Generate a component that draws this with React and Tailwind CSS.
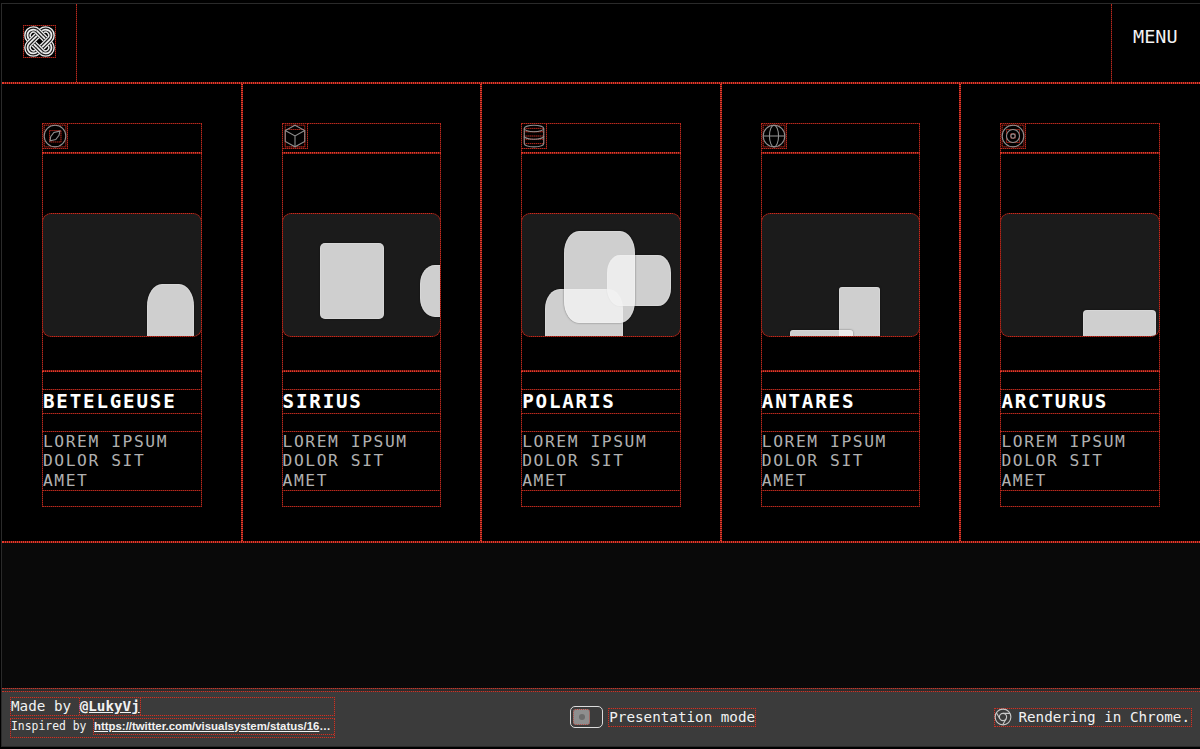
import clsx from 'clsx';

const stars = [
  {
    name: 'BETELGEUSE',
    icon: 'compass',
    shapes: ['left-[104px] top-[70px] w-[47px] h-[76px] rounded-[15px/22px]'],
  },
  {
    name: 'SIRIUS',
    icon: 'cube',
    shapes: [
      'left-[37px] top-[29px] w-[64px] h-[76px] rounded-[5px]',
      'left-[137px] top-[51px] w-[60px] h-[52px] rounded-[15px/19px]',
    ],
  },
  {
    name: 'POLARIS',
    icon: 'database',
    shapes: [
      'left-[23px] top-[75px] w-[78px] h-[80px] rounded-[15px/20px]',
      'left-[85px] top-[41px] w-[64px] h-[51px] rounded-[13px/18px]',
      'left-[42px] top-[17px] w-[71px] h-[92px] rounded-[15px/22px]',
    ],
  },
  {
    name: 'ANTARES',
    icon: 'globe',
    shapes: [
      'left-[77px] top-[73px] w-[41px] h-[70px] rounded-[3px]',
      'left-[28px] top-[116px] w-[63px] h-[40px] rounded-[3px]',
    ],
  },
  {
    name: 'ARCTURUS',
    icon: 'target',
    shapes: ['left-[82px] top-[96px] w-[73px] h-[50px] rounded-[4px]'],
  },
];

// Dotted debug outlines. The gaps between the dots are a darker red.
const strong =
  'border-dotted border-[#e5392a] [background:linear-gradient(#000,#000)_padding-box,linear-gradient(#6e1811,#6e1811)_border-box]';
const soft =
  'border-dotted border-[#b8291d] [background:linear-gradient(#000,#000)_padding-box,linear-gradient(#5a140e,#5a140e)_border-box]';
const card =
  'border-dotted border-[#c92b1e] [background:linear-gradient(#1b1b1b,#1b1b1b)_padding-box,linear-gradient(#661811,#661811)_border-box]';
const bar =
  'border-dotted border-[#c2382c] [background:linear-gradient(#3b3b3b,#3b3b3b)_padding-box,linear-gradient(#642c26,#642c26)_border-box]';

const Debug = (props) => (
  <>
    <rect fill="none" stroke="#420e0a" strokeWidth="0.92" {...props} />
    <rect fill="none" stroke="#b8291d" strokeWidth="0.92" strokeDasharray="0.92 0.92" {...props} />
  </>
);

const icons = {
  compass: (
    <>
      <Debug x="2" y="2" width="20" height="20" />
      <Debug x="7" y="7" width="10.5" height="10.5" />
      <circle cx="12" cy="12" r="10" />
      <path d="M16.500 7.500L11 8.700L8 12.700L7.500 16.500L12.700 15.300L15.700 11.300z" />
    </>
  ),
  cube: (
    <>
      <Debug x="3" y="2" width="18" height="20" />
      <Debug x="3" y="6" width="18" height="16" />
      <path d="M12 2l9 5v10l-9 5-9-5V7z" />
      <path d="M3 7l9 5 9-5M12 12v10" />
    </>
  ),
  database: (
    <>
      <Debug x="3" y="5" width="18" height="3" />
      <Debug x="3" y="8" width="18" height="7" />
      <Debug x="3" y="12" width="18" height="7" />
      <ellipse cx="12" cy="5" rx="9" ry="3" />
      <path d="M3 12c0 1.700 4 3 9 3s9-1.300 9-3" />
      <path d="M3 5v14c0 1.700 4 3 9 3s9-1.300 9-3V5" />
    </>
  ),
  globe: (
    <>
      <Debug x="2" y="2" width="20" height="20" />
      <circle cx="12" cy="12" r="10" />
      <ellipse cx="12" cy="12" rx="4.200" ry="10" />
      <path d="M2 12h20" />
    </>
  ),
  target: (
    <>
      <Debug x="2" y="2" width="20" height="20" />
      <Debug x="6" y="6" width="12" height="12" />
      <Debug x="10" y="10" width="4" height="4" />
      <circle cx="12" cy="12" r="10" />
      <circle cx="12" cy="12" r="6" />
      <circle cx="12" cy="12" r="2" />
    </>
  ),
};

// Each band of the knot is three parallel white lines
function Band({ d }) {
  return (
    <>
      <path d={d} stroke="#000" strokeWidth="7.600" />
      <path d={d} stroke="#ececec" strokeWidth="7" />
      <path d={d} stroke="#1a1a1a" strokeWidth="4.200" />
      <path d={d} stroke="#ececec" strokeWidth="1.800" />
    </>
  );
}

function Logo() {
  return (
    <svg viewBox="0 0 32 32" fill="none" className="size-[31px]">
      <Band d="M13.740 5.260L26.740 18.260A6 6 0 0 1 18.260 26.740L5.260 13.740A6 6 0 0 1 13.740 5.260Z" />
      <Band d="M18.260 5.260L5.260 18.260A6 6 0 0 0 13.740 26.740L26.740 13.740A6 6 0 0 0 18.260 5.260Z" />
      <Band d="M13.300 4.820L18.800 10.320" />
      <Band d="M13.200 21.680L18.700 27.180" />
    </svg>
  );
}

function StarColumn({ star, first, last }) {
  return (
    <div
      className={clsx(
        'pt-[39px]',
        strong,
        first ? 'pl-[40px]' : 'border-l pl-[39px]',
        last ? 'pr-[40px]' : 'border-r pr-[39px]'
      )}
    >
      <div className={clsx('h-[384px] border', soft)}>
        <div className={clsx('-mx-px -mt-px h-[30px] border', soft)}>
          <div className={clsx('-mt-px -ml-px size-[26px] border', soft)}>
            <svg
              viewBox="0 0 24 24"
              fill="none"
              stroke="#8f8f8f"
              strokeWidth="1"
              className="-mt-px -ml-px size-[26px] overflow-visible"
            >
              {icons[star.icon]}
            </svg>
          </div>
        </div>
        <div className={clsx('-mx-px -mt-px h-[2px] border-t', strong)} />

        <div className={clsx('-mx-px -mt-px h-[218px] border pt-[59px]', soft)}>
          <div className={clsx('relative -mx-px h-[124px] overflow-hidden rounded-[9px] border', card)}>
            {star.shapes.map((shape) => (
              <div
                key={shape}
                className={clsx(
                  'absolute bg-[#f2f2f2]/84 shadow-[0_0_2px_rgba(0,0,0,0.5),inset_0_0_1px_1px_rgba(255,255,255,0.2)]',
                  shape
                )}
              />
            ))}
          </div>
        </div>

        <div className={clsx('-mx-px border-t', strong)}>
          <div className={clsx('h-[135px] border-x border-b pt-[17px]', soft)}>
            <h2
              className={clsx(
                '-mx-px h-[25px] border text-[19.200px] leading-[23px] font-bold tracking-[1.800px] text-white',
                soft
              )}
            >
              {star.name}
            </h2>
            <p
              className={clsx(
                '-mx-px mt-[17px] h-[60px] border text-[16.300px] leading-[19.400px] tracking-[1.570px] text-[#b0b0b0]',
                soft
              )}
            >
              LOREM IPSUM DOLOR SIT AMET
            </p>
          </div>
        </div>
      </div>
    </div>
  );
}

function ChromeIcon() {
  return (
    <svg viewBox="0 0 24 24" fill="none" stroke="#c8c8c8" strokeWidth="1.500" className="-ml-px size-[18px]">
      <circle cx="12" cy="12" r="10.500" />
      <circle cx="12" cy="12" r="4.800" />
      <path d="M12 7.200h9.300M7.800 14.400L3.200 6.400M16.200 14.400L11.600 22.400" />
    </svg>
  );
}

export default function App() {
  return (
    <div className="h-[749px] w-[1200px] overflow-hidden bg-black pt-[3px] pl-px font-['DejaVu_Sans_Mono',monospace]">
      <div className="flex h-[744px] flex-col border-t border-b border-l border-[#2a2a2a]">
        <header className={clsx('flex h-[79px] shrink-0 justify-between border-b', strong)}>
          <div className={clsx('w-[75px] border-r pt-[21px] pl-[21px]', soft)}>
            <div className={clsx('w-fit border', soft)}>
              <Logo />
            </div>
          </div>
          <div
            className={clsx(
              'w-[89px] border-l pt-[22px] pl-[21px] text-[18.500px] leading-[22px] text-[#f2f2f2]',
              soft
            )}
          >
            MENU
          </div>
        </header>

        <main className={clsx('grid h-[459px] shrink-0 grid-cols-5 border-y', strong)}>
          {stars.map((star, i) => (
            <StarColumn
              key={star.name}
              star={star}
              first={i === 0}
              last={i === stars.length - 1}
            />
          ))}
        </main>

        <div className={clsx('h-px shrink-0 border-t', strong)} />
        <div className="flex-1 bg-[#090909]" />

        <footer className="h-[58px] shrink-0 bg-[#2b2b2b] text-[14.250px] text-[#f2f2f2]">
          <div className={clsx('mb-[2px] h-px border-t', bar)} />
          <div className={clsx('flex h-[55px] items-center justify-between border-t pr-2 pb-[4px] pl-2', bar)}>
            <div className="w-[325px]">
              <div className={clsx('h-[19px] border leading-[17px]', bar)}>
                Made by{' '}
                <a
                  className={clsx(
                    '-ml-px inline-block h-[17px] border-x font-bold underline',
                    bar
                  )}
                >
                  @LukyVj
                </a>
              </div>
              <div className={clsx('mt-[2px] flex h-[20px] border text-[11.400px] leading-[15px]', bar)}>
                <span className="w-[82px] shrink-0 whitespace-pre">Inspired by </span>
                <a
                  className={clsx(
                    "h-[16px] flex-1 truncate border-b border-l font-['Liberation_Sans',sans-serif] text-[11.400px] font-bold underline",
                    bar
                  )}
                >
                  https://twitter.com/visualsystem/status/16
                  <span className="inline-block">…</span>
                </a>
              </div>
            </div>

            <div className="-ml-[3px] flex items-center gap-[5px]">
              <div className="flex h-[22px] w-[33px] items-center rounded-[5px] border-[1.500px] border-[#dcdcdc] pl-[2px]">
                <div className="flex h-[16px] w-[17px] items-center justify-center rounded-[3px] border border-dotted border-[#b3463d] bg-[#8e8e8e]">
                  <div className="size-[6px] rounded-full bg-[#6c6c6c]" />
                </div>
              </div>
              <span className={clsx('h-[19px] border leading-[17px]', bar)}>Presentation mode</span>
            </div>

            <div className={clsx('flex h-[19px] items-center gap-[6px] border pr-px leading-[17px]', bar)}>
              <ChromeIcon />
              <span>Rendering in Chrome.</span>
            </div>
          </div>
        </footer>
      </div>
    </div>
  );
}
